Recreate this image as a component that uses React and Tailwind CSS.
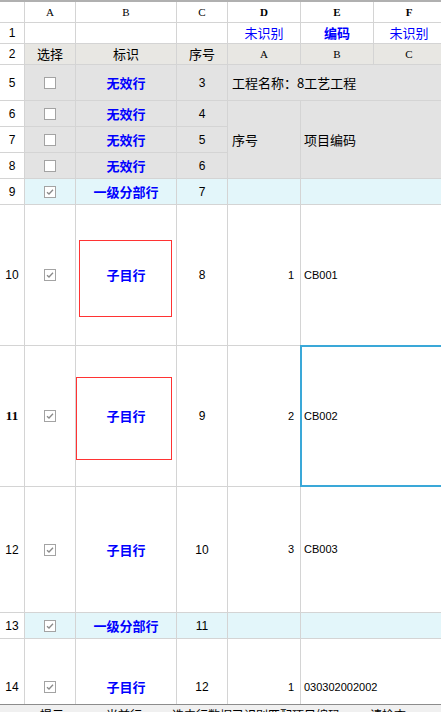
import React from "react";

const cjk = "font-['Noto_Sans_CJK_SC',sans-serif]";
const latin = "font-['Liberation_Sans','Noto_Sans_CJK_SC',sans-serif]";
const letter = "font-['Liberation_Serif',serif] text-[11px] text-black";

function Box({ checked }) {
  return (
    <div className="w-[12px] h-[12px] border border-[#a3a3a3] bg-white flex items-center justify-center">
      {checked && (
        <svg width="8" height="8" viewBox="0 0 8 8">
          <path d="M1 4.2 L3 6 L7 1.8" fill="none" stroke="#8a8a8a" strokeWidth="1.3" />
        </svg>
      )}
    </div>
  );
}

function Cell({ className = "", children }) {
  return <div className={`flex items-center overflow-visible ${className}`}>{children}</div>;
}

function RowNum({ n, bold }) {
  return (
    <Cell className={`bg-white justify-center ${bold ? "font-['Liberation_Serif',serif] font-bold text-[13px]" : `${latin} text-[12px]`} text-black`}>
      {n}
    </Cell>
  );
}

const tag = `${cjk} text-[13px] font-bold text-[#0000ff]`;

function DataRow({ n, bold, bg, checked, label, seq, no, code, box, selected }) {
  return (
    <>
      <RowNum n={n} bold={bold} />
      <Cell className={`${bg} justify-center`}>
        <Box checked={checked} />
      </Cell>
      <Cell className={`${bg} justify-center relative ${tag}`}>
        {label}
        {box && <div className={`absolute border border-[#ff3333] ${box}`} />}
      </Cell>
      <Cell className={`${bg} justify-center ${latin} text-[12px] text-black`}>{seq}</Cell>
      <Cell className={`${bg} justify-end pr-[6px] ${latin} text-[11px] text-black`}>{no}</Cell>
      <Cell className={`${bg} col-span-2 relative pl-[3px] ${latin} text-[11px] text-black`}>
        {code}
        {selected && <div className="absolute -top-px -left-px -bottom-px right-[-40px] border-2 border-[#3aa8d8]" />}
      </Cell>
    </>
  );
}

export default function App() {
  const gray = "bg-[#e3e3e3]";
  const cyan = "bg-[#e3f6fa]";
  return (
    <div className="w-[441px] h-[712px] overflow-hidden bg-white">
      <div className="h-[704px] w-[441px] overflow-hidden border-t-2 border-[#b0b0b0] bg-[#d4d4d4]">
        <div className="grid gap-px grid-cols-[24px_50px_100px_50px_72px_72px_70px] grid-rows-[20px_20px_20px_35px_25px_25px_25px_25px_140px_140px_125px_25px_96px]">
          {/* column headers */}
          <Cell className="bg-white" />
          <Cell className={`bg-white justify-center ${letter}`}>A</Cell>
          <Cell className={`bg-white justify-center ${letter}`}>B</Cell>
          <Cell className={`bg-white justify-center ${letter}`}>C</Cell>
          <Cell className={`bg-white justify-center ${letter} font-bold`}>D</Cell>
          <Cell className={`bg-white justify-center ${letter} font-bold`}>E</Cell>
          <Cell className={`bg-white justify-center ${letter} font-bold`}>F</Cell>

          {/* row 1 */}
          <RowNum n="1" />
          <Cell className="bg-white" />
          <Cell className="bg-white" />
          <Cell className="bg-white" />
          <Cell className={`bg-white justify-center ${cjk} text-[13px] text-[#0000ff]`}>未识别</Cell>
          <Cell className={`bg-white justify-center ${cjk} text-[13px] font-bold text-[#0000ff]`}>编码</Cell>
          <Cell className={`bg-white justify-center ${cjk} text-[13px] text-[#0000ff]`}>未识别</Cell>

          {/* row 2 */}
          <RowNum n="2" />
          <Cell className={`bg-[#e8e7e3] justify-center ${cjk} text-[13px] text-black`}>选择</Cell>
          <Cell className={`bg-[#e8e7e3] justify-center ${cjk} text-[13px] text-black`}>标识</Cell>
          <Cell className={`bg-[#e8e7e3] justify-center ${cjk} text-[13px] text-black`}>序号</Cell>
          <Cell className={`bg-[#e8e7e3] justify-center ${letter}`}>A</Cell>
          <Cell className={`bg-[#e8e7e3] justify-center ${letter}`}>B</Cell>
          <Cell className={`bg-[#e8e7e3] justify-center ${letter}`}>C</Cell>

          {/* row 5 */}
          <RowNum n="5" />
          <Cell className={`${gray} justify-center`}>
            <Box />
          </Cell>
          <Cell className={`${gray} justify-center ${tag}`}>无效行</Cell>
          <Cell className={`${gray} justify-center ${latin} text-[12px] text-black`}>3</Cell>
          <Cell className={`${gray} col-span-3 pl-[4px] ${cjk} text-[13px] text-black`}>工程名称：8工艺工程</Cell>

          {/* row 6 */}
          <RowNum n="6" />
          <Cell className={`${gray} justify-center`}>
            <Box />
          </Cell>
          <Cell className={`${gray} justify-center ${tag}`}>无效行</Cell>
          <Cell className={`${gray} justify-center ${latin} text-[12px] text-black`}>4</Cell>
          <Cell className={`${gray} row-span-3 pl-[4px] ${cjk} text-[13px] text-black`}>序号</Cell>
          <Cell className={`${gray} row-span-3 col-span-2 pl-[3px] ${cjk} text-[13px] text-black`}>项目编码</Cell>

          {/* rows 7, 8 */}
          <RowNum n="7" />
          <Cell className={`${gray} justify-center`}>
            <Box />
          </Cell>
          <Cell className={`${gray} justify-center ${tag}`}>无效行</Cell>
          <Cell className={`${gray} justify-center ${latin} text-[12px] text-black`}>5</Cell>

          <RowNum n="8" />
          <Cell className={`${gray} justify-center`}>
            <Box />
          </Cell>
          <Cell className={`${gray} justify-center ${tag}`}>无效行</Cell>
          <Cell className={`${gray} justify-center ${latin} text-[12px] text-black`}>6</Cell>

          <DataRow n="9" bg={cyan} checked label="一级分部行" seq="7" />
          <DataRow
            n="10"
            bg="bg-white"
            checked
            label="子目行"
            seq="8"
            no="1"
            code="CB001"
            box="top-[35px] left-[3px] w-[93px] h-[77px]"
          />
          <DataRow
            n="11"
            bold
            bg="bg-white"
            checked
            label="子目行"
            seq="9"
            no="2"
            code="CB002"
            box="top-[31px] left-0 w-[96px] h-[83px]"
            selected
          />
          <DataRow n="12" bg="bg-white" checked label="子目行" seq="10" no="3" code="CB003" />
          <DataRow n="13" bg={cyan} checked label="一级分部行" seq="11" />
          <DataRow n="14" bg="bg-white" checked label="子目行" seq="12" no="1" code="030302002002" />
        </div>
      </div>
      <div className="h-[8px] border-t border-[#8c8c8c] bg-[#f0f0f0] overflow-hidden">
        <div className={`pl-[40px] pt-[3px] flex gap-[30px] ${cjk} text-[12px] leading-[14px] text-black whitespace-nowrap`}>
          <span>提示：</span>
          <span>当前行</span>
          <span>选中行数据已识别匹配项目编码</span>
          <span>请检查</span>
        </div>
      </div>
    </div>
  );
}
